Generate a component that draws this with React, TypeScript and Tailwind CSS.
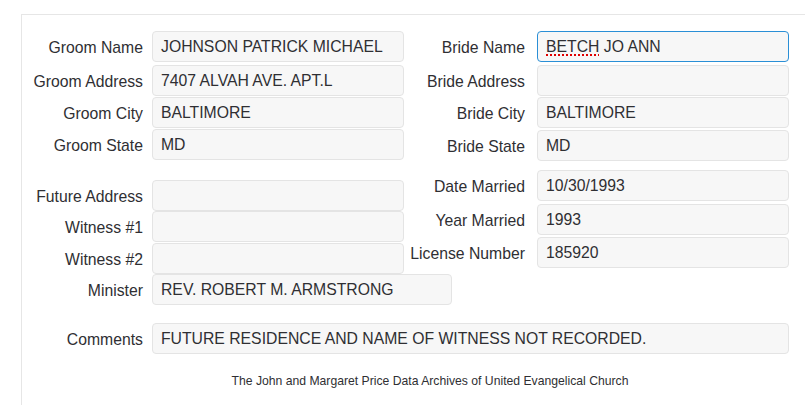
import React from 'react';

type FieldProps = {
  label: string;
  value?: React.ReactNode;
  inputWidth?: string;
  className?: string;
  labelClass?: string;
  focused?: boolean;
};

function Field({ label, value, inputWidth = 'w-[252px]', className = '', labelClass = '', focused = false }: FieldProps) {
  return (
    <div className={`flex items-center ${className}`}>
      <div className={`w-[121px] shrink-0 text-right leading-none pt-[2px] whitespace-nowrap ${labelClass}`}>{label}</div>
      <div
        className={`${inputWidth} h-[31px] ml-[9px] flex items-center px-[8px] rounded-[4px] border bg-[#f7f7f7] whitespace-nowrap ${
          focused ? 'border-[#2a8fd6]' : 'border-[#e4e4e4]'
        }`}
      >
        {value}
      </div>
    </div>
  );
}

function RightField(props: FieldProps) {
  return (
    <div className={`flex items-center ${props.className ?? ''}`}>
      <div className={`w-[121px] shrink-0 flex justify-end leading-none pt-[2px] whitespace-nowrap ${props.labelClass ?? ''}`}>
        {props.label}
      </div>
      <div
        className={`w-[252px] h-[31px] ml-[12px] flex items-center px-[8px] rounded-[4px] border bg-[#f7f7f7] whitespace-nowrap ${
          props.focused ? 'border-[#2a8fd6]' : 'border-[#e4e4e4]'
        }`}
      >
        {props.value}
      </div>
    </div>
  );
}

export default function App() {
  return (
    <div
      className="w-[805px] h-[405px] bg-white pt-[14px] pl-[21px] overflow-hidden text-[#2f2f33] text-[15.75px]"
      style={{ fontFamily: '"Liberation Sans", Arial, sans-serif' }}
    >
      <div className="h-full border-l border-t border-[#e6e6e6] pt-[16px]">
        {/* names, addresses */}
        <div className="flex">
          <div className="flex flex-col">
            <Field label="Groom Name" value="JOHNSON PATRICK MICHAEL" className="mb-[3px]" />
            <Field label="Groom Address" value="7407 ALVAH AVE. APT.L" className="mb-[1px]" />
            <Field label="Groom City" value="BALTIMORE" className="mb-[1px]" />
            <Field label="Groom State" value="MD" />
          </div>
          <div className="flex flex-col">
            <RightField
              label="Bride Name"
              focused
              value={
                <span>
                  <span className="underline decoration-dotted decoration-[#e00000] decoration-2 underline-offset-[3px]">BETCH</span> JO ANN
                </span>
              }
              className="mb-[3px]"
            />
            <RightField label="Bride Address" className="mb-[1px]" />
            <RightField label="Bride City" value="BALTIMORE" className="mb-[2px]" />
            <RightField label="Bride State" value="MD" />
          </div>
        </div>

        {/* misc */}
        <div className="flex">
          <div className="flex flex-col pt-[19px]">
            <Field label="Future Address" />
            <Field label="Witness #1" />
            <Field label="Witness #2" className="mt-[1px]" />
            <Field label="Minister" value="REV. ROBERT M. ARMSTRONG" inputWidth="w-[300px]" />
          </div>
          <div className="flex flex-col pt-[9px] -ml-[48px]">
            <RightField label="Date Married" value="10/30/1993" className="mb-[3px]" />
            <RightField label="Year Married" value="1993" className="mb-[2px]" />
            <RightField label="License Number" value="185920" />
          </div>
        </div>

        {/* comments */}
        <Field
          label="Comments"
          value="FUTURE RESIDENCE AND NAME OF WITNESS NOT RECORDED."
          inputWidth="w-[637px]"
          className="mt-[18px]"
        />

        <div className="mt-[21px] pl-[33px] text-center text-[12.2px] leading-none">
          The John and Margaret Price Data Archives of United Evangelical Church
        </div>
      </div>
    </div>
  );
}
